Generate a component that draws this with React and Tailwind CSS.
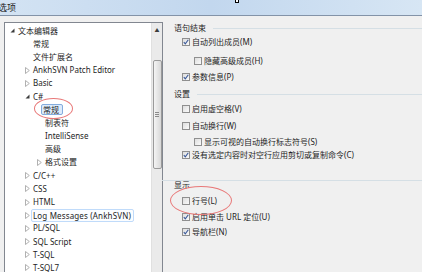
import React from "react";

const FONT = { fontFamily: '"Noto Sans", "Noto Sans CJK SC", sans-serif' };

function Expanded() {
  return (
    <svg width="5" height="5" viewBox="0 0 5 5" className="shrink-0">
      <path d="M4.5 0.5 L4.5 4.5 L0.5 4.5 Z" fill="#3c3c3c" />
    </svg>
  );
}

function Collapsed() {
  return (
    <svg width="5" height="7" viewBox="0 0 5 7" className="shrink-0">
      <path d="M0.5 0.5 L4.3 3.5 L0.5 6.5 Z" fill="white" stroke="#a8a8a8" strokeWidth="0.9" />
    </svg>
  );
}

const tree = [
  { level: 0, arrow: "open", text: "文本编辑器" },
  { level: 1, text: "常规" },
  { level: 1, text: "文件扩展名" },
  { level: 1, arrow: "closed", text: "AnkhSVN Patch Editor" },
  { level: 1, arrow: "closed", text: "Basic" },
  { level: 1, arrow: "open", text: "C#" },
  { level: 2, text: "常规", selected: true },
  { level: 2, text: "制表符" },
  { level: 2, text: "IntelliSense" },
  { level: 2, text: "高级" },
  { level: 2, arrow: "closed", text: "格式设置" },
  { level: 1, arrow: "closed", text: "C/C++" },
  { level: 1, arrow: "closed", text: "CSS" },
  { level: 1, arrow: "closed", text: "HTML" },
  { level: 1, arrow: "closed", text: "Log Messages (AnkhSVN)", hover: true },
  { level: 1, arrow: "closed", text: "PL/SQL" },
  { level: 1, arrow: "closed", text: "SQL Script" },
  { level: 1, arrow: "closed", text: "T-SQL" },
  { level: 1, arrow: "closed", text: "T-SQL7" },
];

function TreeRow({ item }) {
  const pad = ["pl-[5px]", "pl-[20px]", "pl-[32px]"][item.level];
  return (
    <div className={`h-[13.2px] flex items-center ${pad}`}>
      <div className="w-[4px] flex justify-center">
        {item.arrow === "open" && <Expanded />}
        {item.arrow === "closed" && <Collapsed />}
      </div>
      <div className="w-[4px]" />
      {item.selected ? (
        <div className="relative -ml-[4px]">
          <span className="block border border-[#84acdd] bg-[#dcebfc] rounded-[2px] px-[1px] h-[11px] leading-[9px] pr-[3px]">
            {item.text}
          </span>
          <div className="absolute -left-[7px] -top-[6px] w-[39px] h-[21px] rounded-[50%] border border-[#e87878]" />
        </div>
      ) : item.hover ? (
        <span className="block -ml-[2px] border border-[#c0dbfa] rounded-[2px] bg-[#fbfdff] px-[1px] pr-[2px] h-[13px] leading-[11px] tracking-[0.15px]">
          {item.text}
        </span>
      ) : (
        <span className="leading-[10px]">{item.text}</span>
      )}
    </div>
  );
}

function Check({ checked }) {
  return (
    <div className="w-[8px] h-[8px] border border-[#8f8f8f] bg-gradient-to-br from-[#dedede] to-[#fafafa] flex items-center justify-center shrink-0">
      {checked && (
        <svg width="6" height="6" viewBox="0 0 6 6">
          <path d="M0.8 3.2 L2.3 4.9 L5.3 0.8" fill="none" stroke="#3b5a9a" strokeWidth="1.1" />
        </svg>
      )}
    </div>
  );
}

function Opt({ checked, text, level = 1, mt }) {
  return (
    <div className={`h-[10px] flex items-center gap-[2px] ${level === 2 ? "ml-[20px]" : "ml-[8px]"} ${mt}`}>
      <Check checked={checked} />
      <span className="leading-[10px] whitespace-nowrap">{text}</span>
    </div>
  );
}

function Header({ text, mt }) {
  return (
    <div className={`h-[10px] flex items-center gap-[7px] ${mt}`}>
      <span className="leading-[10px]">{text}</span>
      <div className="flex-1 h-px bg-[#d5dfe5]" />
    </div>
  );
}

export default function App() {
  return (
    <div className="w-[422px] h-[272px] overflow-hidden bg-[#f0f0f0] text-[8px] text-[#1e1e1e] flex flex-col" style={FONT}>
      {/* title bar */}
      <div className="h-[16px] shrink-0 border-b border-[#8393a8] bg-gradient-to-r from-[#d3e3f3] via-[#c2d7ee] to-[#d7e6f4] flex items-center relative">
        <span className="text-[9px] leading-[9px] -ml-[2px] text-[#222]">选项</span>
        <div className="absolute left-[235px] top-0 w-[4px] h-[3px] bg-white border border-black border-t-0" />
      </div>

      <div className="flex flex-1 min-h-0">
        {/* tree */}
        <div className="pl-[4px] pt-[6px] shrink-0">
          <div className="w-[159px] h-[260px] bg-white border-l border-t border-r border-[#828790] flex">
            <div className="flex-1 pt-[1px]">
              {tree.map((item, i) => (
                <TreeRow key={i} item={item} />
              ))}
            </div>
            <div className="w-[11px] bg-[#eaeaea] border-l border-[#e0e0e0] flex flex-col items-center">
              <div className="h-[14px] flex items-center justify-center text-[#3c3c3c] text-[5px] leading-none">▲</div>
              <div className="mt-[23px] w-[9px] h-[109px] rounded-[2px] border border-[#9a9a9a] bg-gradient-to-r from-[#f4f4f4] to-[#d8d8d8] flex items-center justify-center">
                <div className="flex flex-col gap-[1px]">
                  <div className="w-[4px] h-px bg-[#8a8a8a]" />
                  <div className="w-[4px] h-px bg-[#8a8a8a]" />
                  <div className="w-[4px] h-px bg-[#8a8a8a]" />
                </div>
              </div>
              <div className="mt-auto h-[10px] flex items-center text-[#3c3c3c] text-[5px] leading-none">▼</div>
            </div>
          </div>
        </div>

        {/* options */}
        <div className="flex-1 pl-[11px]">
          <Header text="语句结束" mt="mt-[7px]" />
          <Opt checked text="自动列出成员(M)" mt="mt-[4px]" />
          <Opt level={2} text="隐藏高级成员(H)" mt="mt-[9px]" />
          <Opt checked text="参数信息(P)" mt="mt-[6px]" />
          <Header text="设置" mt="mt-[7px]" />
          <Opt text="启用虚空格(V)" mt="mt-[5px]" />
          <Opt text="自动换行(W)" mt="mt-[7px]" />
          <Opt level={2} text="显示可视的自动换行标志符号(S)" mt="mt-[6px]" />
          <Opt checked text="没有选定内容时对空行应用剪切或复制命令(C)" mt="mt-[3px]" />
          <div className="mt-[20px] -ml-[12px] border-t border-[#d5dfe5] pl-[12px]">
            <div className="h-[8px] leading-[8px]">显示</div>
          </div>
          <div className="relative">
            <Opt text="行号(L)" mt="mt-[7px]" />
            <div className="absolute left-[-4px] top-[-10px] w-[62px] h-[29px] rounded-[50%] border border-[#e87878]" />
          </div>
          <Opt checked text="启用单击 URL 定位(U)" mt="mt-[6px]" />
          <Opt checked text="导航栏(N)" mt="mt-[5px]" />
        </div>
      </div>
    </div>
  );
}
